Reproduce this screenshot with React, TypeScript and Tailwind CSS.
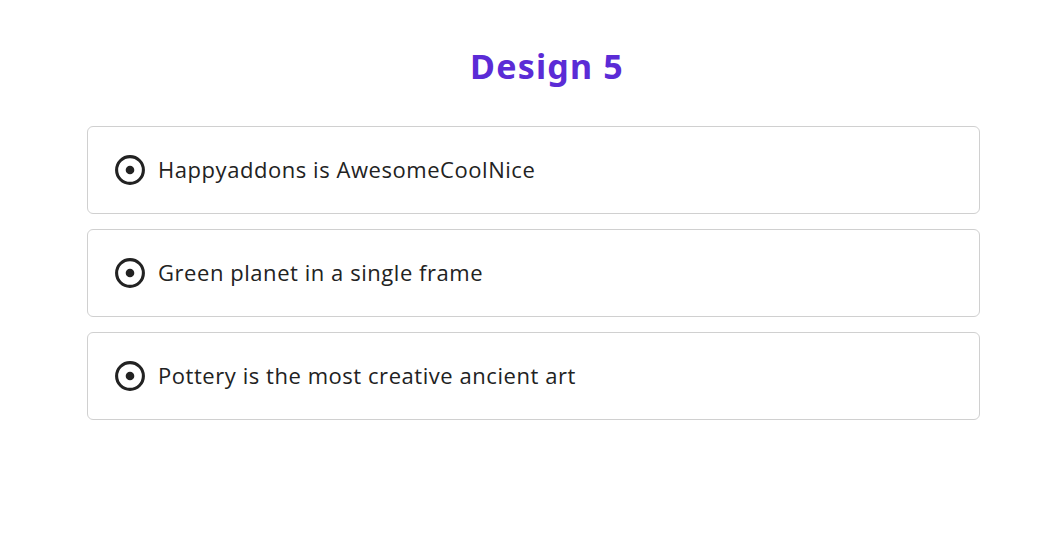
import React from 'react'

const items = [
    'Happyaddons is AwesomeCoolNice',
    'Green planet in a single frame',
    'Pottery is the most creative ancient art',
]

const DotCircle = () => (
    <svg width="30" height="30" viewBox="0 0 30 30" className="shrink-0">
        <circle cx="15" cy="15" r="13.4" fill="none" stroke="#222" strokeWidth="3.1" />
        <circle cx="15" cy="15" r="4.3" fill="#222" />
    </svg>
)

const App = () => {
    return (
        <div className="min-h-[548px] bg-white pt-[44px]" style={{ fontFamily: '"Open Sans", sans-serif' }}>
            {/* Title */}
            <h2 className="pl-[30px] text-center text-[34px] leading-[44px] font-bold tracking-[1.2px] text-[#5b2bd6]" style={{ fontFamily: '"Noto Sans", sans-serif' }}>
                Design 5
            </h2>

            {/* List */}
            <div className="ml-[87px] mt-[38px] flex w-[893px] flex-col gap-[15px]">
                {items.map((item) => (
                    <div key={item} className="flex h-[88px] items-center gap-[13px] rounded-[6px] border border-[#d0d0d0] pl-[27px]">
                        <DotCircle />
                        <span className="-mt-[2px] text-[22px] tracking-[0.55px] text-[#222]">{item}</span>
                    </div>
                ))}
            </div>
        </div>
    )
}

export default App
